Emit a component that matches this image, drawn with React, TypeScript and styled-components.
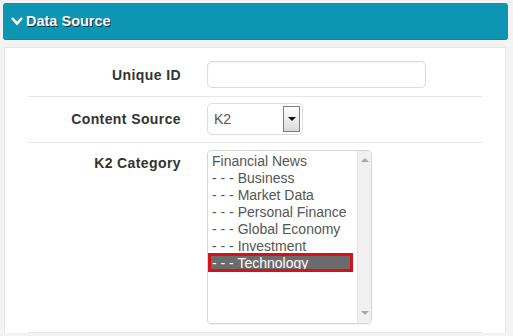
import React from "react";
import styled, { createGlobalStyle } from "styled-components";

const GlobalStyle = createGlobalStyle`
  html, body {
    margin: 0;
    padding: 0;
    background: #f3f3f3;
    font-family: "Liberation Sans", Arial, sans-serif;
  }
`;

const Page = styled.div`
  padding: 3px 5px 0 3px;
  height: 336px;
  box-sizing: border-box;
  overflow: hidden;
`;

const Header = styled.div`
  height: 37px;
  background: #0c96b3;
  border-bottom: 1px solid #0a86a0;
  border-radius: 3px;
  display: flex;
  align-items: center;
  gap: 2px;
  padding-left: 7px;
  box-sizing: border-box;
  color: #fff;
  font-weight: 700;
  font-size: 14.5px;
  text-shadow: 1px 1px 0 rgba(0, 0, 0, 0.7);
`;

const Panel = styled.div`
  margin: 7px 2px 0 1px;
  background: #fff;
  border: 1px solid #e6e6e6;
  border-bottom: none;
  padding: 0 23px 0 23px;
`;

const Row = styled.div<{ $top: number; $bottom: number; $align?: string }>`
  display: grid;
  grid-template-columns: 153px 1fr;
  column-gap: 26px;
  align-items: ${(p) => p.$align || "center"};
  padding: ${(p) => p.$top}px 0 ${(p) => p.$bottom}px;
  border-bottom: 1px solid #e6e6e6;
`;

const Label = styled.div<{ $pad?: number }>`
  text-align: right;
  font-weight: 700;
  font-size: 14px;
  letter-spacing: 0.4px;
  line-height: 20px;
  color: #333;
  padding-top: ${(p) => p.$pad || 0}px;
`;

const TextInput = styled.input`
  width: 219px;
  height: 27px;
  box-sizing: border-box;
  border: 1px solid #dcdcdc;
  border-radius: 5px;
  box-shadow: inset 0 1px 2px rgba(0, 0, 0, 0.05);
  outline: none;
  font-family: inherit;
  font-size: 14px;
  padding: 0 6px;
`;

const Select = styled.div`
  width: 96px;
  height: 32px;
  box-sizing: border-box;
  border: 1px solid #dcdcdc;
  border-radius: 5px;
  display: flex;
  align-items: center;
  justify-content: space-between;
  padding: 0 2px 0 6px;
  font-size: 14px;
  color: #555;
`;

const ArrowButton = styled.div`
  width: 17px;
  height: 26px;
  box-sizing: border-box;
  border: 1px solid #7d7d7d;
  background: linear-gradient(#ffffff, #dadada);
  display: flex;
  align-items: center;
  justify-content: center;
`;

const Triangle = styled.div<{ $up?: boolean; $color: string }>`
  width: 0;
  height: 0;
  border-left: 4px solid transparent;
  border-right: 4px solid transparent;
  ${(p) =>
    p.$up
      ? `border-bottom: 4px solid ${p.$color};`
      : `border-top: 4px solid ${p.$color};`}
`;

const ListBox = styled.div`
  width: 165px;
  height: 174px;
  box-sizing: border-box;
  border: 1px solid #d6d6d6;
  border-radius: 4px;
  box-shadow: 0 1px 1px rgba(0, 0, 0, 0.06);
  display: grid;
  grid-template-columns: 1fr 14px;
  overflow: hidden;
`;

const Options = styled.div`
  padding: 2px 6px 0 3px;
`;

const Option = styled.div<{ $selected?: boolean }>`
  position: relative;
  height: 17px;
  line-height: 17px;
  font-size: 14px;
  padding-left: 1px;
  white-space: nowrap;
  color: ${(p) => (p.$selected ? "#fff" : "#555")};
  background: ${(p) => (p.$selected ? "#6b6b6b" : "transparent")};

  ${(p) =>
    p.$selected &&
    `
    &::after {
      content: "";
      position: absolute;
      top: -2px;
      bottom: 0;
      left: -3px;
      right: -2px;
      border: 3px solid #d5121b;
    }
  `}
`;

const Scrollbar = styled.div`
  background: #f0f0f0;
  border-left: 1px solid #e4e4e4;
  display: flex;
  flex-direction: column;
  justify-content: space-between;
  align-items: center;
  padding: 7px 0 8px;
`;

const categories = [
  "Financial News",
  "- - - Business",
  "- - - Market Data",
  "- - - Personal Finance",
  "- - - Global Economy",
  "- - - Investment",
  "- - - Technology",
];

const App: React.FC = () => {
  return (
    <>
      <GlobalStyle />
      <Page>
        <Header>
          <svg width="14" height="10" viewBox="0 0 14 10">
            <polyline
              points="2,2 7,7.5 12,2"
              fill="none"
              stroke="#fff"
              strokeWidth="2.6"
            />
          </svg>
          Data Source
        </Header>
        <Panel>
          <Row $top={13} $bottom={8}>
            <Label>Unique ID</Label>
            <div>
              <TextInput type="text" />
            </div>
          </Row>
          <Row $top={6} $bottom={7}>
            <Label>Content Source</Label>
            <Select>
              K2
              <ArrowButton>
                <Triangle $color="#111" />
              </ArrowButton>
            </Select>
          </Row>
          <Row $top={7} $bottom={8} $align="start">
            <Label $pad={3}>K2 Category</Label>
            <ListBox>
              <Options>
                {categories.map((c, i) => (
                  <Option key={c} $selected={i === categories.length - 1}>
                    {c}
                  </Option>
                ))}
              </Options>
              <Scrollbar>
                <Triangle $up $color="#a8a8a8" />
                <Triangle $color="#a8a8a8" />
              </Scrollbar>
            </ListBox>
          </Row>
        </Panel>
      </Page>
    </>
  );
};

export default App;
